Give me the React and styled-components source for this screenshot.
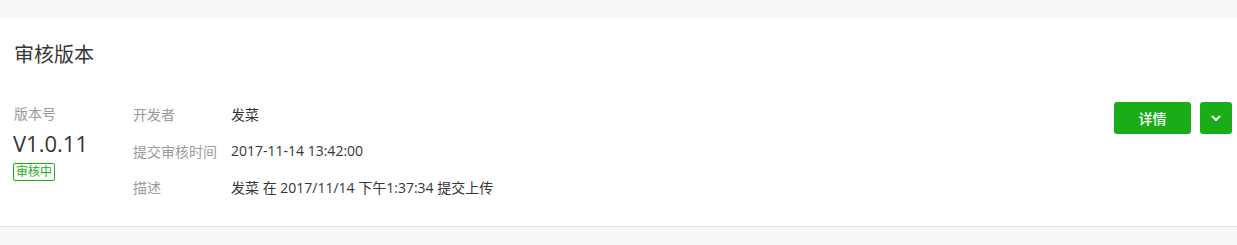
import React from 'react';
import styled, { createGlobalStyle } from 'styled-components';

const GlobalStyle = createGlobalStyle`
  html, body {
    margin: 0;
    padding: 0;
    background: #f6f8f9;
    font-family: "Open Sans", "Noto Sans CJK SC", sans-serif;
  }
`;

const Page = styled.div`
  padding-top: 19px;
  min-height: 245px;
  box-sizing: border-box;
`;

const Card = styled.section`
  background: #fff;
  border-bottom: 1px solid #e4e7ea;
  padding: 0 5px 20px 14px;
`;

const Title = styled.h2`
  margin: 0;
  height: 72px;
  line-height: 72px;
  font-size: 20px;
  font-weight: normal;
  color: #353535;
`;

const Body = styled.div`
  display: flex;
  align-items: flex-start;
  padding-top: 5px;
`;

const VersionCol = styled.div`
  width: 119px;
  flex-shrink: 0;
`;

const Label = styled.div`
  font-size: 14px;
  line-height: 36px;
  color: #9a9a9a;
`;

const Version = styled.div`
  font-size: 22px;
  line-height: 22px;
  font-weight: 400;
  color: #353535;
  margin-left: -1px;
`;

const Badge = styled.span`
  display: inline-block;
  margin-top: 9px;
  margin-left: -1px;
  padding: 0 2px;
  font-size: 12px;
  line-height: 16px;
  color: #1aad19;
  border: 1px solid #1aad19;
  border-radius: 2px;
`;

const Info = styled.dl`
  flex: 1;
  margin: 0;
  display: grid;
  grid-template-columns: 98px 1fr;
  grid-auto-rows: 36.5px;
  align-items: center;
  font-size: 14px;
`;

const Term = styled.dt`
  color: #9a9a9a;
`;

const Desc = styled.dd`
  margin: 0;
  color: #353535;
`;

const Actions = styled.div`
  display: flex;
  gap: 9px;
  margin-top: 6px;
`;

const Button = styled.button`
  height: 32px;
  width: ${(p) => (p.$square ? '32px' : '77px')};
  padding: 0;
  border: none;
  border-radius: 3px;
  background: #1aad19;
  color: #fff;
  font-family: inherit;
  font-size: 14px;
  font-weight: 500;
  display: flex;
  align-items: center;
  justify-content: center;
  cursor: pointer;
`;

const rows = [
  ['开发者', '发菜'],
  ['提交审核时间', '2017-11-14 13:42:00'],
  ['描述', '发菜 在 2017/11/14 下午1:37:34 提交上传'],
];

const App = () => (
  <Page>
    <GlobalStyle />
    <Card>
      <Title>审核版本</Title>
      <Body>
        <VersionCol>
          <Label>版本号</Label>
          <Version>V1.0.11</Version>
          <Badge>审核中</Badge>
        </VersionCol>
        <Info>
          {rows.map(([k, v]) => (
            <React.Fragment key={k}>
              <Term>{k}</Term>
              <Desc>{v}</Desc>
            </React.Fragment>
          ))}
        </Info>
        <Actions>
          <Button>详情</Button>
          <Button $square aria-label="更多">
            <svg width="10" height="7" viewBox="0 0 10 7">
              <polyline points="1.5,1.5 5,5 8.5,1.5" fill="none" stroke="#fff" strokeWidth="2" strokeLinecap="round" strokeLinejoin="round" />
            </svg>
          </Button>
        </Actions>
      </Body>
    </Card>
  </Page>
);

export default App;
